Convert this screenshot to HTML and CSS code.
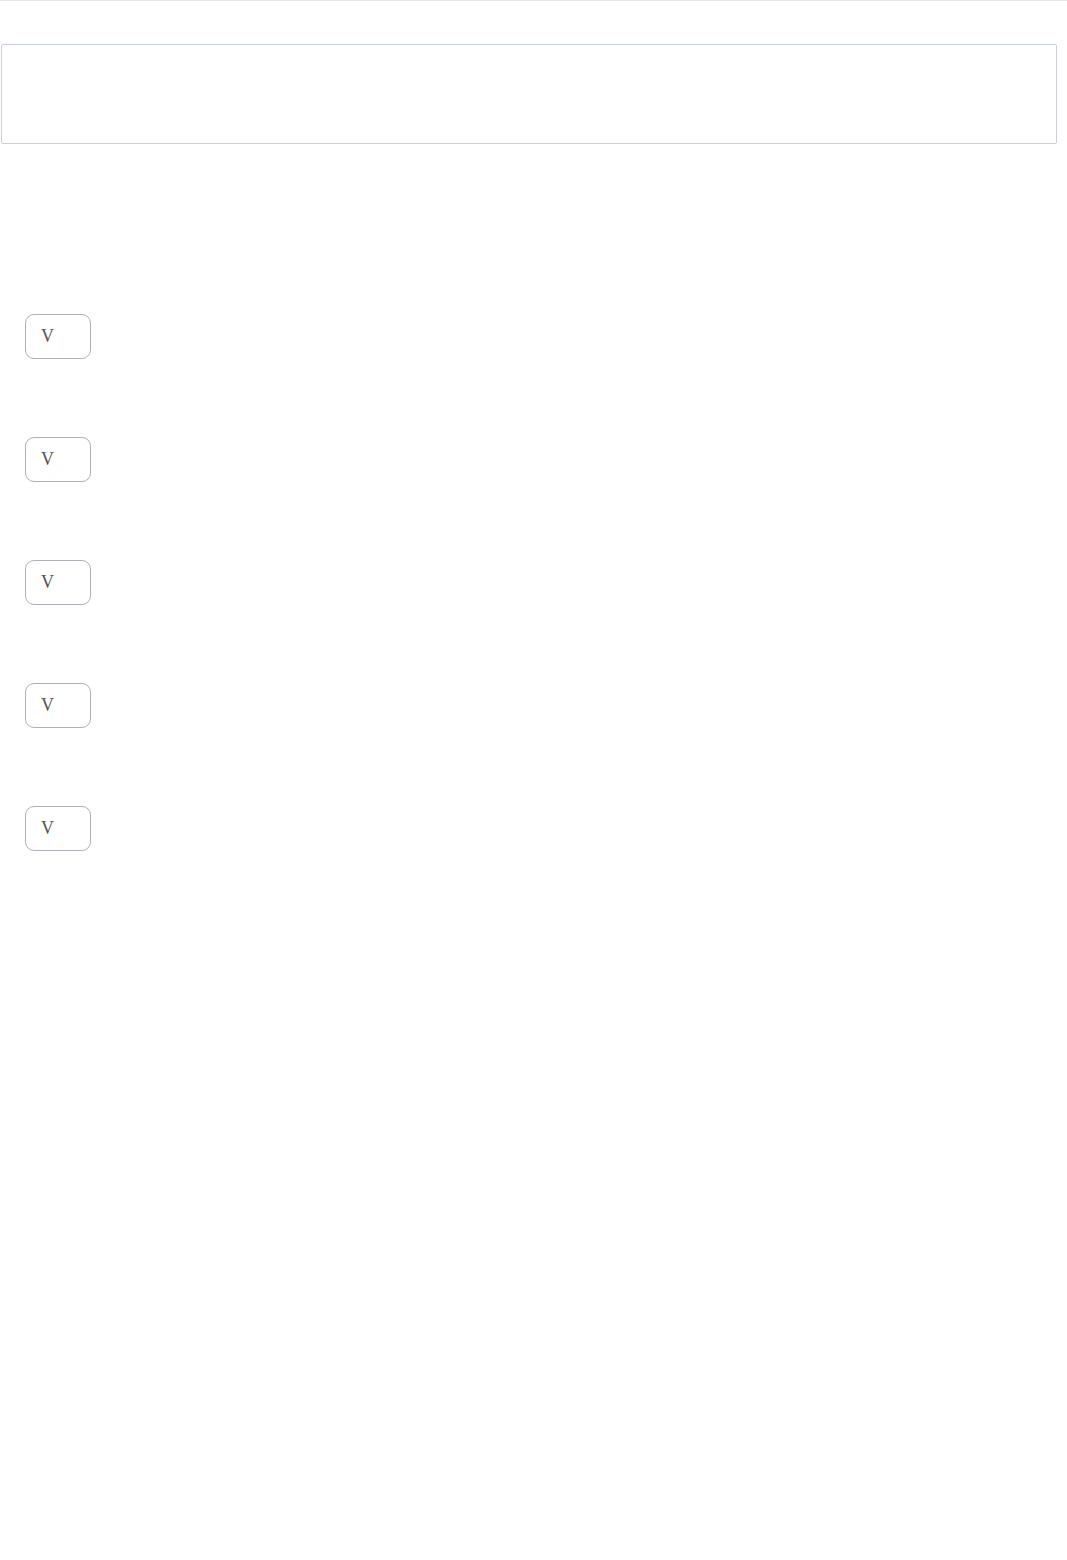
FILE: index.html
```html
<!DOCTYPE html>
<html>
<head>
<meta charset="utf-8">
<link rel="stylesheet" href="styles.css">
</head>
<body>
<div class="topline"></div>
<div class="panel"></div>
<div class="list">
  <div class="row"><button class="vbtn">V</button></div>
  <div class="row"><button class="vbtn">V</button></div>
  <div class="row"><button class="vbtn">V</button></div>
  <div class="row"><button class="vbtn">V</button></div>
  <div class="row"><button class="vbtn">V</button></div>
</div>
</body>
</html>
```
FILE: styles.css
```css
html, body {
  margin: 0;
  padding: 0;
  background: #ffffff;
}
body {
  font-family: "Liberation Serif", "DejaVu Serif", serif;
}
.topline {
  height: 1px;
  background: #e3e5e9;
}
.panel {
  margin: 43px 10px 0 1px;
  height: 98px;
  border: 1px solid #c9d0db;
  border-radius: 2px;
}
.list {
  display: flex;
  flex-direction: column;
  gap: 78px;
  padding: 170px 0 0 25px;
}
.row {
  display: flex;
}
.vbtn {
  box-sizing: border-box;
  width: 66px;
  height: 45px;
  border: 1px solid #adb1b8;
  border-radius: 9px;
  background: #ffffff;
  color: #555555;
  font-family: "Liberation Serif", "DejaVu Serif", serif;
  font-size: 18px;
  text-align: left;
  padding: 0 0 0 15px;
}
```
